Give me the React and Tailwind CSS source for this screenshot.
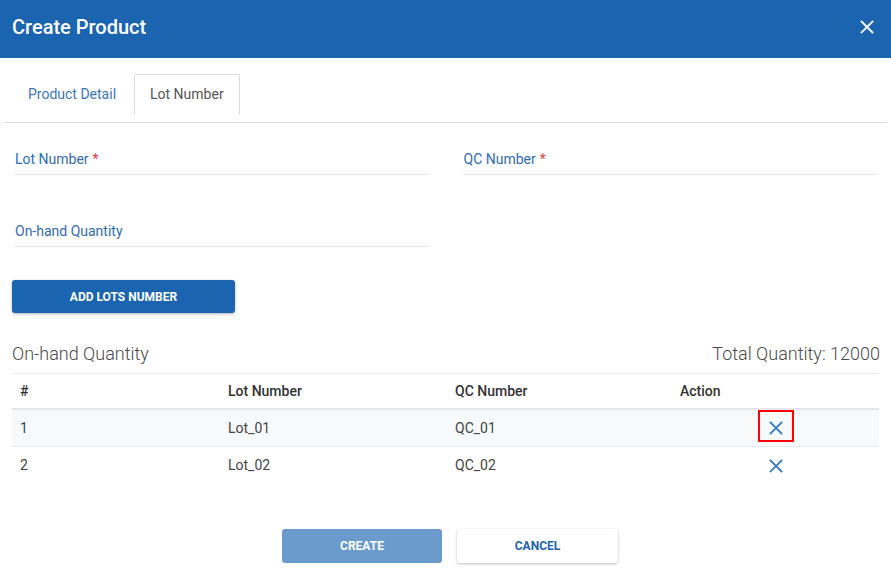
import React from "react";

function XIcon({ className, strokeWidth = 2 }) {
  return (
    <svg viewBox="0 0 14 14" className={className} fill="none" stroke="currentColor" strokeWidth={strokeWidth} strokeLinecap="square">
      <path d="M1.5 1.5 L12.5 12.5 M12.5 1.5 L1.5 12.5" />
    </svg>
  );
}

function Field({ label, required }) {
  return (
    <div className="flex flex-col">
      <div className="h-5 leading-5 text-[14px] text-[#2d6db3] pl-px">
        {label}
        {required && <span className="text-[#f0373e] ml-1">*</span>}
      </div>
      <div className="mt-[5px] border-b border-[#e8e8e8]" />
    </div>
  );
}

export default function App() {
  const rows = [
    { n: 1, lot: "Lot_01", qc: "QC_01", bg: "bg-[#f8f9fb] border-b border-[#e6e9ee]", focus: true },
    { n: 2, lot: "Lot_02", qc: "QC_02", bg: "bg-white", focus: false },
  ];
  return (
    <div className="w-[891px] h-[569px] bg-white overflow-hidden" style={{ fontFamily: "Roboto, 'Noto Sans', sans-serif" }}>
      <div className="h-[58px] bg-[#1b64af] flex items-center justify-between pl-3 pr-[17px] pb-1">
        <div className="text-white text-[20px] font-medium leading-none">Create Product</div>
        <XIcon className="w-[14px] h-[14px] text-white" strokeWidth={1.8} />
      </div>

      <div className="mt-4 mx-1 border-b border-[#dcdcdc] pb-[7px] flex pl-2">
        <div className="h-[41px] px-4 flex items-center text-[14px] text-[#3a78bd]">Product Detail</div>
        <div className="ml-[2px] h-[41px] px-[15px] pb-[2px] flex items-center text-[14px] text-[#555] border border-b-0 border-[#dddddd] rounded-t-[2px] bg-white">Lot Number</div>
      </div>

      <div className="mt-[26px] px-[14px] grid grid-cols-2 gap-x-[34px] gap-y-[46px]">
        <Field label="Lot Number" required />
        <Field label="QC Number" required />
        <Field label="On-hand Quantity" />
      </div>

      <div className="px-3 mt-[33px]">
        <button className="w-[223px] h-[33px] rounded-[3px] bg-[#1b64af] text-white text-[12px] font-bold uppercase shadow-[0_1px_3px_rgba(0,0,0,0.3)]">
          ADD LOTS NUMBER
        </button>
      </div>

      <div className="pl-3 pr-[11px] mt-[31px] flex items-center justify-between h-5">
        <div className="text-[18px] font-light text-[#4a4a4a] leading-5">On-hand Quantity</div>
        <div className="text-[18px] font-light text-[#4a4a4a] leading-5">Total Quantity: 12000</div>
      </div>

      <div className="mx-3 mt-[9px] border-t border-[#e8eaee] text-[14px]">
        <div className="grid grid-cols-[208px_227px_225px_1fr] h-[36px] items-center border-b-2 border-[#e3e7ec] font-medium text-[#333]">
          <div className="pl-2">#</div>
          <div className="pl-2">Lot Number</div>
          <div className="pl-2">QC Number</div>
          <div className="pl-2">Action</div>
        </div>
        {rows.map((r) => (
          <div key={r.n} className={`grid grid-cols-[208px_227px_225px_1fr] h-[37px] items-center text-[#444] ${r.bg}`}>
            <div className="pl-2">{r.n}</div>
            <div className="pl-2">{r.lot}</div>
            <div className="pl-2">{r.qc}</div>
            <div className="flex justify-center">
              {r.focus ? (
                <div className="w-[36px] h-[32px] border-2 border-[#ff0000] flex items-center justify-center -mt-[4px] pt-[4px]">
                  <XIcon className="w-[14px] h-[14px] text-[#3a7cc0]" strokeWidth={1.8} />
                </div>
              ) : (
                <XIcon className="w-[14px] h-[14px] text-[#3a7cc0]" strokeWidth={1.8} />
              )}
            </div>
          </div>
        ))}
      </div>

      <div className="mt-[45px] flex justify-center gap-[15px] pl-[9px]">
        <button className="w-[160px] h-[34px] rounded-[3px] bg-[#6b9bcd] text-white text-[12px] font-bold">CREATE</button>
        <button className="w-[161px] h-[34px] rounded-[3px] bg-white text-[#1b64af] text-[12px] font-bold shadow-[0_1px_3px_rgba(0,0,0,0.25)]">CANCEL</button>
      </div>
    </div>
  );
}
